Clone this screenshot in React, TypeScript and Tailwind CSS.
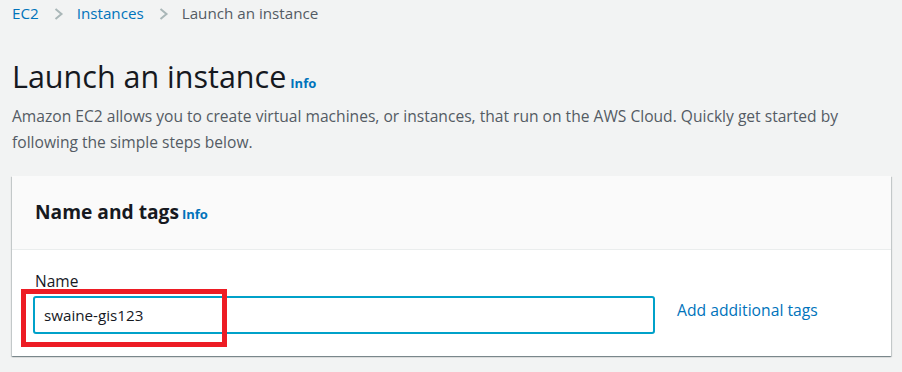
import React from 'react';

const Chevron: React.FC = () => (
  <svg width="10" height="12" viewBox="0 0 10 12" className="ml-[15px] mr-[13px]">
    <path d="M1.5 1 L7.5 6 L1.5 11" fill="none" stroke="#aab7b8" strokeWidth="2" />
  </svg>
);

const App: React.FC = () => {
  return (
    <div className="w-[902px] h-[372px] overflow-hidden bg-[#f2f3f3] text-[#16191f] font-['Open_Sans',sans-serif]">
      <div className="px-3">
        {/* breadcrumb */}
        <nav className="flex items-center h-[27px] text-[15.2px]">
          <span className="text-[#0073bb]">EC2</span>
          <Chevron />
          <span className="text-[#0073bb]">Instances</span>
          <Chevron />
          <span className="text-[#545b64]">Launch an instance</span>
        </nav>

        {/* header */}
        <div className="mt-[29px] flex items-baseline">
          <h1 className="text-[30.5px] leading-[40px] font-normal">Launch an instance</h1>
          <span className="ml-[4px] text-[13px] font-bold text-[#0073bb]">Info</span>
        </div>
        <p className="mt-[7px] text-[15.6px] leading-[26px] text-[#545b64] pr-[40px]">
          Amazon EC2 allows you to create virtual machines, or instances, that run on the AWS Cloud. Quickly get started by following the simple steps below.
        </p>

        {/* card */}
        <section className="mt-[21px] w-[879px] bg-white shadow-[0_1px_1px_0_rgba(0,28,36,0.3),1px_1px_1px_0_rgba(0,28,36,0.15),-1px_1px_1px_0_rgba(0,28,36,0.15)]">
          <header className="h-[74px] flex items-center px-[23px] bg-[#fafafa] border-b border-[#eaeded]">
            <h2 className="text-[19.2px] font-bold">Name and tags</h2>
            <span className="ml-[3px] mt-[4px] text-[13px] font-bold text-[#0073bb]">Info</span>
          </header>
          <div className="px-[21px] pt-[20px] pb-[22px]">
            <label className="block pl-[2px] text-[15.5px] leading-[22px]">Name</label>
            <div className="mt-[4px] flex items-center">
              <div className="relative">
                <div className="w-[622px] h-[38px] border-2 border-[#00a1c9] rounded-[3px] flex items-center pl-[9px] text-[15.2px]">
                  swaine-gis123
                </div>
                <div className="absolute left-[-12px] top-[-7px] w-[206px] h-[58px] border-[5px] border-[#ed1c24]" />
              </div>
              <span className="ml-[22px] mb-[8px] text-[15.7px] text-[#0073bb]">Add additional tags</span>
            </div>
          </div>
        </section>
      </div>
    </div>
  );
};

export default App;
